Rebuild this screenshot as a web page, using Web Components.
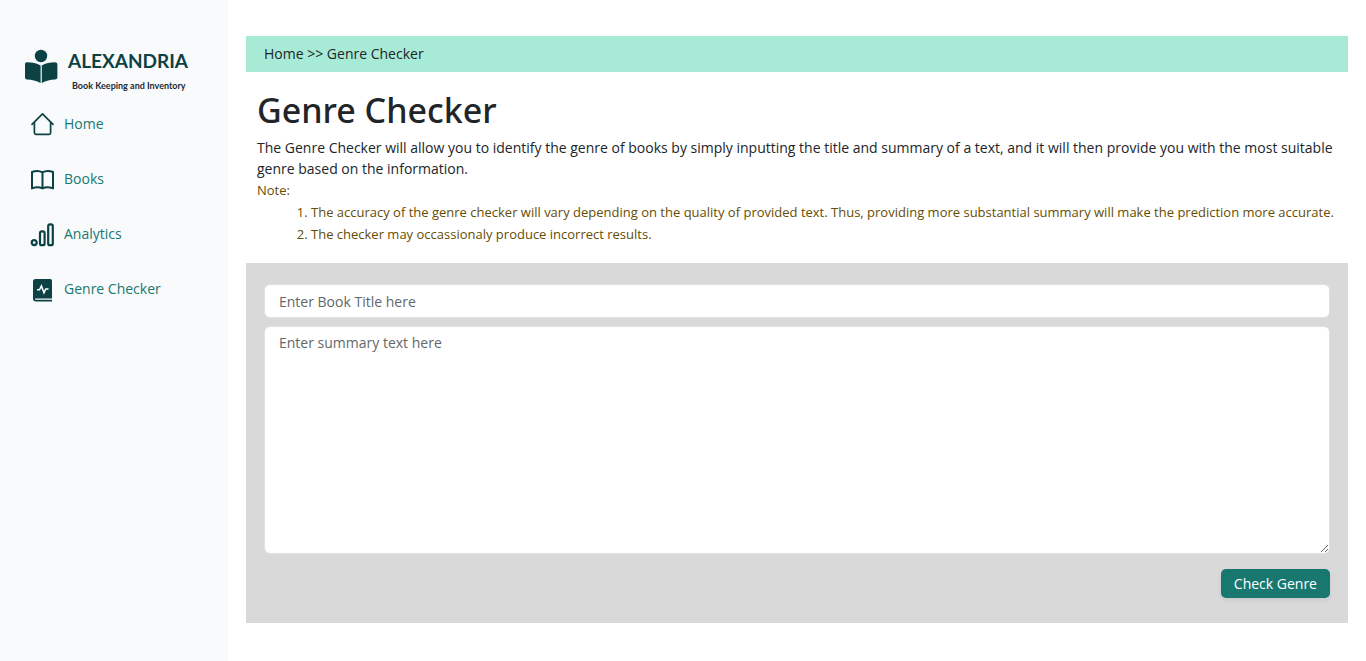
<!DOCTYPE html>
<html lang="en">
<head>
<meta charset="utf-8">
<meta name="viewport" content="width=device-width, initial-scale=1">
<title>Alexandria - Genre Checker</title>
<style>
  body { margin: 0; background: #fff; color: #212529; font-family: "Open Sans", "Noto Sans", sans-serif; font-size: 14px; line-height: 22px; }
</style>
</head>
<body>
<app-shell>
  <side-bar slot="side">
    <brand-logo slot="brand"></brand-logo>
    <nav-item icon="home" href="#home">Home</nav-item>
    <nav-item icon="books" href="#books">Books</nav-item>
    <nav-item icon="analytics" href="#analytics">Analytics</nav-item>
    <nav-item icon="genre" href="#genre-checker">Genre Checker</nav-item>
  </side-bar>
  <bread-crumb>Home &gt;&gt; Genre Checker</bread-crumb>
  <page-intro></page-intro>
  <genre-form></genre-form>
</app-shell>
<script>
const define = (name, html) => customElements.define(name, class extends HTMLElement {
  constructor() {
    super();
    this.attachShadow({ mode: "open" }).innerHTML = html;
  }
});

define("app-shell", `
  <style>
    :host { display: flex; min-height: 100vh; }
    main { flex: 1; min-width: 0; box-sizing: border-box; padding: 36px 18px; }
  </style>
  <slot name="side"></slot>
  <main><slot></slot></main>`);

define("side-bar", `
  <style>
    :host { display: block; flex: 0 0 228px; box-sizing: border-box; background: #f8fafc; padding: 48px 24px 24px; }
    nav { display: flex; flex-direction: column; gap: 31px; margin-top: 20px; padding-left: 6px; }
  </style>
  <slot name="brand"></slot>
  <nav aria-label="Main"><slot></slot></nav>`);

define("brand-logo", `
  <style>
    :host { display: flex; gap: 10px; color: #0d4244; font-family: Lato, sans-serif; }
    svg { width: 34px; height: 36px; flex: none; }
    .name { font-size: 19px; line-height: 26px; font-weight: 700; }
    .tag { font-size: 9px; line-height: 12px; font-weight: 700; color: #1c2b33; padding: 6px 0 0 4px; white-space: nowrap; }
  </style>
  <svg viewBox="0 0 34 36" fill="currentColor" aria-hidden="true">
    <circle cx="17" cy="8" r="6.2"/>
    <path d="M16.6 17.4V35C12.5 32.6 7.5 31.9 3 31.6 1.8 31.5 1 30.8 1 29.6V16.2C1 15 1.8 14.2 3 14.2 8 14.3 12.9 14.9 16.6 17.4z"/>
    <path d="M17.8 17.4V35C21.7 32.6 26.5 31.9 31 31.6 32.2 31.5 33.4 30.8 33.4 29.6V16.2C33.4 15 32.2 14.2 31 14.2 26 14.3 21.5 14.9 17.8 17.4z"/>
  </svg>
  <div><div class="name">ALEXANDRIA</div><div class="tag">Book Keeping and Inventory</div></div>`);

const icons = {
  home: `<g fill="none" stroke="currentColor" stroke-width="1.7" stroke-linecap="round" stroke-linejoin="round"><path d="M2 12.4 12.5 1.8 23 12.4"/><path d="M4.4 10.5V20.8a1.5 1.5 0 0 0 1.5 1.5H19.1a1.5 1.5 0 0 0 1.5-1.5V10.5"/></g>`,
  books: `<path fill="none" stroke="currentColor" stroke-width="2" stroke-linejoin="round" d="M12.5 5.4C9.5 3.6 5.5 3.6 2 5V21.4C5.5 19.9 9.5 19.9 12.5 21.4 15.5 19.9 19.5 19.9 23 21.4V5C19.5 3.6 15.5 3.6 12.5 5.4zM12.5 5.4V21.4"/>`,
  analytics: `<g fill="none" stroke="currentColor" stroke-width="2.2"><circle cx="4.2" cy="20.6" r="2.5"/><rect x="10" y="9.4" width="4.6" height="13.8" rx="1.8"/><rect x="18.2" y="2.4" width="4.6" height="20.8" rx="1.8"/></g>`,
  genre: `<path fill="currentColor" d="M5.5 2H20.2a1.8 1.8 0 0 1 1.8 1.8V21.6H5.6a.5.5 0 0 0 0 1.2H22V24.6H6a3 3 0 0 1-3-3V4.5A2.5 2.5 0 0 1 5.5 2z"/><path fill="none" stroke="#fff" stroke-width="1.6" d="M7 12.8H9.5L11.4 9 14 15.8 15.8 12H18.5"/>`
};
customElements.define("nav-item", class extends HTMLElement {
  constructor() {
    super();
    this.attachShadow({ mode: "open" }).innerHTML = `
      <style>
        :host { display: block; }
        a { display: flex; align-items: center; gap: 9px; height: 24px; color: #187870; text-decoration: none; }
        svg { width: 25px; height: 25px; flex: none; color: #0d4244; }
      </style>
      <a href="${this.getAttribute("href")}"><svg viewBox="0 0 25 25" aria-hidden="true">${icons[this.getAttribute("icon")]}</svg><slot></slot></a>`;
  }
});

define("bread-crumb", `
  <style>:host { display: block; background: #a7ead5; padding: 7px 18px; }</style>
  <slot></slot>`);

define("page-intro", `
  <style>
    :host { display: block; padding: 16px 11px 18px; }
    h1 { margin: 0 0 5px; font-family: "Noto Sans", sans-serif; font-size: 34px; line-height: 44px; font-weight: 500; }
    p { margin: 0; }
    .lead { line-height: 21px; }
    .note { color: #664d03; font-size: 13px; }
    ol { margin: 0; padding-left: 54px; }
  </style>
  <h1>Genre Checker</h1>
  <p class="lead">The Genre Checker will allow you to identify the genre of books by simply inputting the title and summary of a text, and it will then provide you with the most suitable genre based on the information.</p>
  <div class="note">
    <p>Note:</p>
    <ol>
      <li>The accuracy of the genre checker will vary depending on the quality of provided text. Thus, providing more substantial summary will make the prediction more accurate.</li>
      <li>The checker may occassionaly produce incorrect results.</li>
    </ol>
  </div>`);

define("genre-form", `
  <style>
    :host { display: block; background: #d9d9d9; padding: 21px 18px 25px; }
    form { display: flex; flex-direction: column; gap: 8px; }
    input, textarea { display: block; box-sizing: border-box; width: 100%; margin: 0; padding: 5px 14px; border: 1px solid #dee2e6; border-radius: 6px; background: #fff; color: #212529; font: inherit; }
    input { height: 34px; }
    textarea { height: 228px; resize: vertical; }
    ::placeholder { color: #63686c; opacity: 1; }
    button { align-self: flex-end; margin-top: 7px; height: 29px; padding: 0 13px; border: 0; border-radius: 5px; background: #187870; color: #fff; font: inherit; font-weight: 500; box-shadow: 0 2px 4px rgba(0,0,0,.08); }
  </style>
  <form>
    <input type="text" aria-label="Book title" placeholder="Enter Book Title here">
    <textarea aria-label="Summary text" placeholder="Enter summary text here"></textarea>
    <button type="button">Check Genre</button>
  </form>`);
</script>
</body>
</html>
